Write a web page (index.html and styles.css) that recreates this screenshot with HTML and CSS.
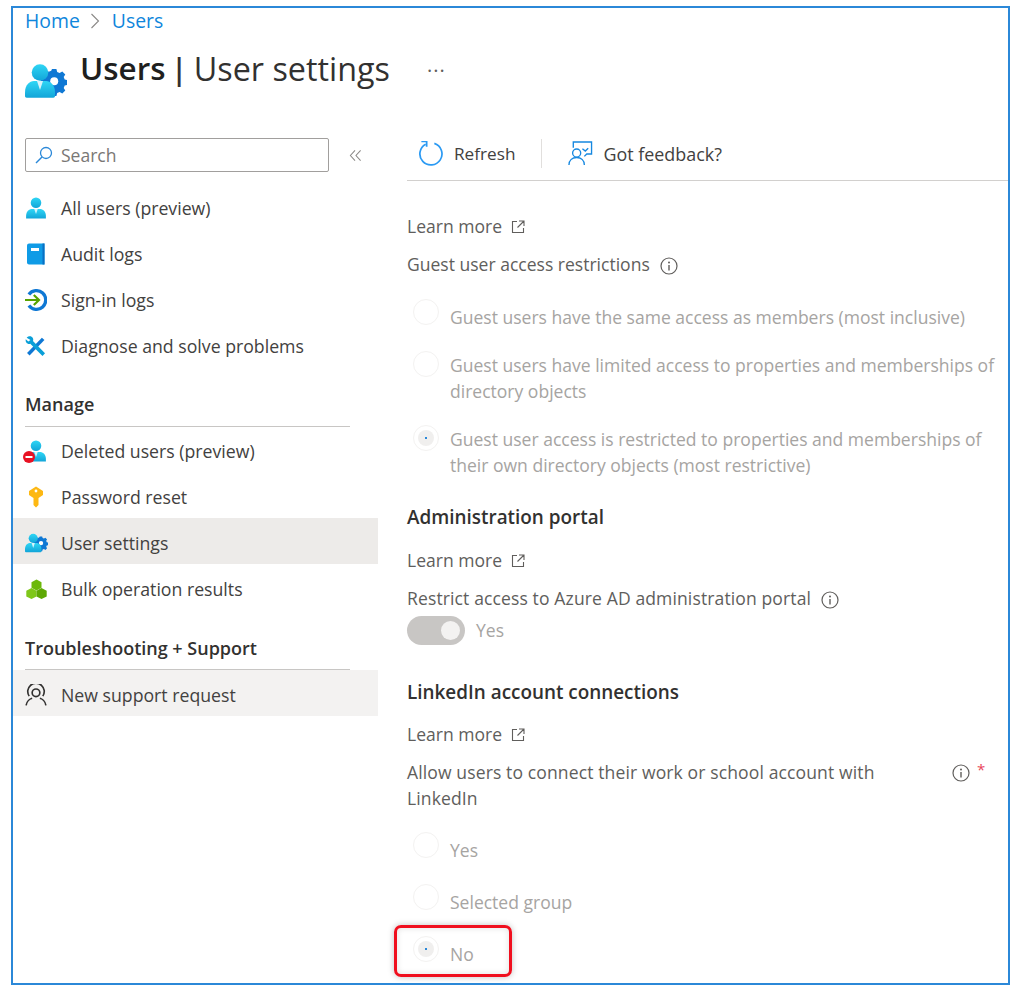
FILE: index.html
```html
<!DOCTYPE html>
<html lang="en">
<head>
<meta charset="utf-8">
<title>Users | User settings</title>
<link rel="stylesheet" href="styles.css">
</head>
<body>
<svg class="defs" width="0" height="0" aria-hidden="true">
  <defs>
    <linearGradient id="cy" x1="0" y1="0" x2="0" y2="1">
      <stop offset="0" stop-color="#2fd6f5"/>
      <stop offset="1" stop-color="#12a5d8"/>
    </linearGradient>
    <symbol id="person" viewBox="0 0 20 20">
      <circle cx="10" cy="5.2" r="4.8" fill="url(#cy)"/>
      <path d="M1 19.600V17c0-3.600 2.600-6 5.600-6H13.400c3 0 5.600 2.400 5.600 6v2.600z" fill="url(#cy)"/>
      <path d="M8.400 11h3.200L10 15.400z" fill="#d8f3fb"/>
    </symbol>
    <symbol id="usergear" viewBox="0 0 42 34">
      <path fill="#0f78d4" d="M27 5h4.400l.8 3 2.400 1 2.700-1.600 3 3-1.600 2.700 1 2.400 3 .8v4.400l-3 .8-1 2.400 1.600 2.700-3 3-2.700-1.600-2.400 1-.8 3H27l-.8-3-2.400-1-2.700 1.600-3-3 1.600-2.700-1-2.400-3-.8V15l3-.8 1-2.400-1.600-2.700 3-3 2.700 1.600 2.400-1z"/>
      <circle cx="29.200" cy="17.200" r="4" fill="#fff"/>
      <circle cx="15" cy="8.500" r="8.300" fill="url(#cy)"/>
      <path d="M0 32v-3.500C0 21 4.500 17 9 17h12c4.500 0 9 4 9 11.500V32c0 1-.7 1.700-1.700 1.700H1.700C.7 33.700 0 33 0 32z" fill="url(#cy)"/>
      <path d="M12 17h6L15 26z" fill="#d8f3fb"/>
    </symbol>
    <symbol id="extlink" viewBox="0 0 14 14">
      <path d="M6 1.500H1.500v11h11V8M8 1h5v5M13 1L6.500 7.500" fill="none" stroke="#605e5c" stroke-width="1.100"/>
    </symbol>
    <symbol id="info" viewBox="0 0 18 18">
      <circle cx="9" cy="9" r="8" fill="none" stroke="#605e5c" stroke-width="1.200"/>
      <circle cx="9" cy="5.500" r="1" fill="#605e5c"/>
      <path d="M9 8v5.500" stroke="#605e5c" stroke-width="1.400"/>
    </symbol>
  </defs>
</svg>

<div class="frame">
  <nav class="crumbs">
    <a class="crumb">Home</a>
    <svg class="crumb-sep" viewBox="0 0 10 16"><path d="M1.500 1l7 7-7 7" fill="none" stroke="#8a8886" stroke-width="1.100"/></svg>
    <a class="crumb">Users</a>
  </nav>

  <header class="title-row">
    <svg class="title-icon"><use href="#usergear"/></svg>
    <h1 class="title"><b>Users</b><span class="bar">|</span><span class="sub">User settings</span></h1>
    <span class="more">···</span>
  </header>

  <div class="columns">
    <aside class="side">
      <div class="search-row">
        <div class="search">
          <svg class="search-icon" viewBox="0 0 18 18"><circle cx="11" cy="7" r="5.500" fill="none" stroke="#2b88d8" stroke-width="1.300"/><path d="M7 11l-6 6" stroke="#2b88d8" stroke-width="1.500"/></svg>
          <span>Search</span>
        </div>
        <svg class="collapse" viewBox="0 0 14 14"><path d="M6.500 1.500L1.500 7l5 5.500M12.500 1.500L7.500 7l5 5.500" fill="none" stroke="#8a8886" stroke-width="1.100"/></svg>
      </div>

      <ul class="nav nav-top">
        <li class="item">
          <svg class="ico"><use href="#person"/></svg>All users (preview)
        </li>
        <li class="item">
          <svg class="ico" viewBox="0 0 20 22"><path d="M1 2.500C1 1.200 2 .5 3 .5h15.500v21H3c-1 0-2-.7-2-2z" fill="#0f9be6"/><path d="M16.500.5h2v21h-2z" fill="#0a6fc2"/><path d="M5 5h8v3H5z" fill="#fff"/></svg>Audit logs
        </li>
        <li class="item">
          <svg class="ico" viewBox="0 0 20 20"><path d="M3.500 5A8.500 8.500 0 1 1 3.500 15" fill="none" stroke="#0f78d4" stroke-width="3"/><path d="M0 10h12M8 5.500l4.700 4.500L8 14.500" fill="none" stroke="#57a300" stroke-width="2"/></svg>Sign-in logs
        </li>
        <li class="item">
          <svg class="ico" viewBox="0 0 20 20"><path d="M3 17.500L16.500 3.500" stroke="#0f78d4" stroke-width="3.200"/><path d="M1.500 2.500c2-2 4.500-1.700 5.500 0 .7 1.200.6 2.300.2 3l11 11.200-2.300 2.500L4.800 8C3.500 8.400 2 8 1.200 6.800.500 5.800.5 4.700.7 3.800L3 6l2-1.500z" fill="#0a9fd8"/></svg>Diagnose and solve problems
        </li>
      </ul>

      <h2 class="group">Manage</h2>
      <ul class="nav">
        <li class="item">
          <span class="ico-wrap">
            <svg class="ico"><use href="#person"/></svg>
            <svg class="badge" viewBox="0 0 12 12"><circle cx="6" cy="6" r="6" fill="#e81123"/><path d="M2.500 5h7v2h-7z" fill="#fff"/></svg>
          </span>Deleted users (preview)
        </li>
        <li class="item">
          <svg class="ico" viewBox="0 0 20 22"><path d="M10 .5L17 5v4l-4.500 3v7L10 21.500 7.500 19v-7L3 9V5z" fill="#fdb813"/><circle cx="10" cy="5" r="1.400" fill="#fff"/></svg>Password reset
        </li>
        <li class="item active">
          <svg class="ico ico-wide"><use href="#usergear"/></svg>User settings
        </li>
        <li class="item">
          <svg class="ico ico-wide" viewBox="0 0 22 20"><path d="M11 .5l5 2.700v5.600l-5 2.700-5-2.700V3.200z" fill="#6cb80a"/><path d="M6 9l5 2.800v5.600L6 20 .8 17.400v-5.600z" fill="#7fc71a"/><path d="M16 9l5.200 2.800v5.600L16 20l-5-2.600v-5.600z" fill="#5ea805"/></svg>Bulk operation results
        </li>
      </ul>

      <h2 class="group group-2">Troubleshooting + Support</h2>
      <ul class="nav">
        <li class="item support">
          <svg class="ico" viewBox="0 0 20 20"><g fill="none" stroke="#323130" stroke-width="1.500"><circle cx="10" cy="8" r="3.500"/><path d="M3.800 11A7.500 7.500 0 1 1 16.200 11"/><path d="M1 19.500c.5-3.800 3.500-6 5.500-6.500M19 19.500c-.5-3.800-3.500-6-5.500-6.500"/></g></svg>New support request
        </li>
      </ul>
    </aside>

    <main class="main">
      <div class="toolbar">
        <span class="tool">
          <svg class="tool-ico" viewBox="0 0 26 26"><path d="M8 3.300A11.500 11.500 0 1 0 17 2.500" fill="none" stroke="#2b9af3" stroke-width="1.800"/><path d="M3.500 1h5.500v5.500" fill="none" stroke="#2b9af3" stroke-width="1.800" transform="translate(0 -.5)"/></svg>Refresh
        </span>
        <span class="tool-sep"></span>
        <span class="tool tool-fb">
          <svg class="tool-ico" viewBox="0 0 26 26"><g fill="none" stroke="#1688e0" stroke-width="1.400"><path d="M5.500 7V1h19v12.500h-5l-2.500 2.500"/><circle cx="9" cy="12.500" r="4.200"/><path d="M1 25c0-5 3.500-7.800 8-7.800s8 2.800 8 7.800"/><path d="M15 8l3 2.500 3-3"/></g></svg>Got feedback?
        </span>
      </div>

      <div class="form">
        <p class="line learn">Learn more<svg class="ext"><use href="#extlink"/></svg></p>
        <p class="line gap-12">Guest user access restrictions<svg class="inf"><use href="#info"/></svg></p>

        <div class="radio gap-27"><span class="dot"></span><span class="rtext">Guest users have the same access as members (most inclusive)</span></div>
        <div class="radio two gap-22"><span class="dot"></span><span class="rtext">Guest users have limited access to properties and memberships of directory objects</span></div>
        <div class="radio two gap-22"><span class="dot on"></span><span class="rtext">Guest user access is restricted to properties and memberships of their own directory objects (most restrictive)</span></div>

        <h3 class="section gap-26">Administration portal</h3>
        <p class="line gap-17">Learn more<svg class="ext"><use href="#extlink"/></svg></p>
        <p class="line gap-12 wide">Restrict access to Azure AD administration portal<svg class="inf"><use href="#info"/></svg></p>
        <div class="toggle-row"><span class="toggle"><span class="knob"></span></span><span class="rtext">Yes</span></div>

        <h3 class="section gap-36">LinkedIn account connections</h3>
        <p class="line gap-16">Learn more<svg class="ext"><use href="#extlink"/></svg></p>
        <div class="allow gap-12">
          <p class="line allow-text wide">Allow users to connect their work or school account with LinkedIn</p>
          <svg class="inf inf-allow"><use href="#info"/></svg>
          <span class="req">*</span>
        </div>

        <div class="radio gap-26"><span class="dot"></span><span class="rtext">Yes</span></div>
        <div class="radio gap-26"><span class="dot"></span><span class="rtext">Selected group</span></div>
        <div class="radio gap-26"><span class="dot on"></span><span class="rtext">No</span></div>
      </div>
    </main>
  </div>

  <div class="highlight"></div>
</div>
</body>
</html>
```
FILE: styles.css
```css
* { box-sizing: border-box; }
html, body { margin: 0; padding: 0; background: #fff; }
body {
  font-family: "Open Sans", "Noto Sans", "Liberation Sans", sans-serif;
  font-size: 17.55px;
  line-height: 26px;
  color: #323130;
  height: 990px;
  overflow: hidden;
}
.defs { position: absolute; }

.frame {
  position: relative;
  margin: 6px 0 0 11px;
  width: 999px;
  height: 979px;
  border: 2px solid #2b88d8;
  overflow: hidden;
}

.crumbs { display: flex; align-items: center; height: 26px; margin-left: 12px; }
.crumb { color: #0f86dc; font-size: 19.4px; }
.crumb-sep { width: 10px; height: 16px; margin: 0 12px 0 10px; }

.title-row { display: flex; align-items: flex-start; height: 63px; margin-left: 12px; }
.title-icon { width: 42px; height: 34px; margin-top: 30px; flex: none; }
.title { margin: 11px 0 0 13px; font-size: 31.4px; line-height: 46px; font-weight: 400; color: #323130; white-space: nowrap; display: flex; }
.title b { font-weight: 600; color: #201f1e; }
.bar { color: #323130; font-weight: 600; margin: 0 6px 0 5px; }
.sub { font-size: 32.3px; }
.more { margin: 24px 0 0 37px; font-size: 20px; color: #605e5c; letter-spacing: 1px; }

.columns { display: flex; margin-top: 41px; }
.side { width: 365px; flex: none; }
.search-row { display: flex; align-items: center; height: 34px; margin-left: 12px; }
.search {
  width: 304px; height: 34px;
  border: 1px solid #a19f9d; border-radius: 2px;
  display: flex; align-items: center;
  color: #797775;
  padding-left: 9px;
}
.search-icon { width: 18px; height: 18px; margin-right: 8px; }
.collapse { width: 13px; height: 13px; margin-left: 20px; }

.nav { list-style: none; margin: 0; padding: 0; }
.nav-top { margin-top: 11px; }
.item { display: flex; align-items: center; height: 46px; padding: 4px 0 0 12px; color: #424140; white-space: nowrap; font-size: 17.7px; }
.ico { width: 22px; height: 22px; margin-right: 14px; flex: none; }
.ico-wide { width: 23px; height: 20px; margin-right: 13px; }
.ico-wrap { position: relative; display: flex; }
.badge { position: absolute; left: -2px; top: 11px; width: 12px; height: 12px; }
.active { background: #edebe9; }
.support { background: #f3f2f1; }

.group {
  margin: 18px 0 -1px 12px; width: 325px; height: 42px;
  font-size: 18px; line-height: 38px; font-weight: 600; color: #323130;
  border-bottom: 1px solid #c8c6c4;
}
.group-2 { margin-top: 16px; margin-bottom: 0; height: 44px; line-height: 44px; }

.main { flex: 1; padding-left: 29px; min-width: 0; margin-top: -1px; }
.toolbar { display: flex; align-items: center; height: 44px; padding-bottom: 10px; border-bottom: 1px solid #d2d0ce; }
.tool { display: flex; align-items: center; color: #424140; padding-left: 11px; font-size: 17.2px; }
.tool-fb { font-size: 17.9px; }
.tool-ico { width: 25px; height: 25px; margin-right: 11px; }
.tool-fb .tool-ico { margin-right: 10px; }
.tool-sep { width: 1px; height: 29px; background: #e1dfdd; margin: 0 15px 0 26px; }

.form { padding-right: 8px; color: #605e5c; }
.line { margin: 0; }
.wide { letter-spacing: .12px; }
.learn { margin-top: 32px; }
.gap-12 { margin-top: 12px; }
.gap-16 { margin-top: 16px; }
.gap-17 { margin-top: 17px; }
.gap-22 { margin-top: 22px; }
.gap-26 { margin-top: 26px; }
.gap-27 { margin-top: 27px; }
.gap-36 { margin-top: 36px; }
.ext { width: 14px; height: 14px; margin-left: 9px; vertical-align: -1px; }
.inf { width: 18px; height: 18px; margin-left: 10px; vertical-align: -4px; }

.radio { display: flex; align-items: flex-start; padding-left: 6px; }
.dot {
  width: 26px; height: 26px; border-radius: 50%;
  border: 1px solid #f3f2f1; flex: none;
  margin: -5px 11px 0 0;
  display: flex; align-items: center; justify-content: center;
}
.two .dot { margin-top: -1px; }
.on::before {
  content: "";
  width: 16px; height: 16px; border-radius: 50%;
  background: radial-gradient(circle, #2b88d8 0 1px, #f0efee 1.500px);
}
.rtext { color: #a6a4a2; }
.section { margin-bottom: 0; margin-left: 0; margin-right: 0; font-size: 18.9px; line-height: 26px; font-weight: 600; color: #323130; }
.toggle-row { display: flex; align-items: center; height: 26px; margin-top: 6px; }
.toggle {
  width: 58px; height: 29px; border-radius: 15px;
  background: #c8c6c4; margin-right: 11px; flex: none;
  display: flex; align-items: center; justify-content: flex-end; padding-right: 5px;
}
.knob { width: 19px; height: 19px; border-radius: 50%; background: #f3f2f1; }

.allow { display: flex; align-items: flex-start; }
.allow-text { width: 500px; }
.inf-allow { margin: 5px 0 0 45px; flex: none; }
.req { color: #e8475a; margin-left: 7px; font-size: 15px; line-height: 20px; }

.highlight {
  position: absolute; left: 381px; top: 917px;
  width: 118px; height: 52px;
  border: 3px solid #f00f1e; border-radius: 7px;
  box-shadow: 0 0 6px rgba(0,0,0,.25), inset 0 0 6px rgba(0,0,0,.12);
}
```
